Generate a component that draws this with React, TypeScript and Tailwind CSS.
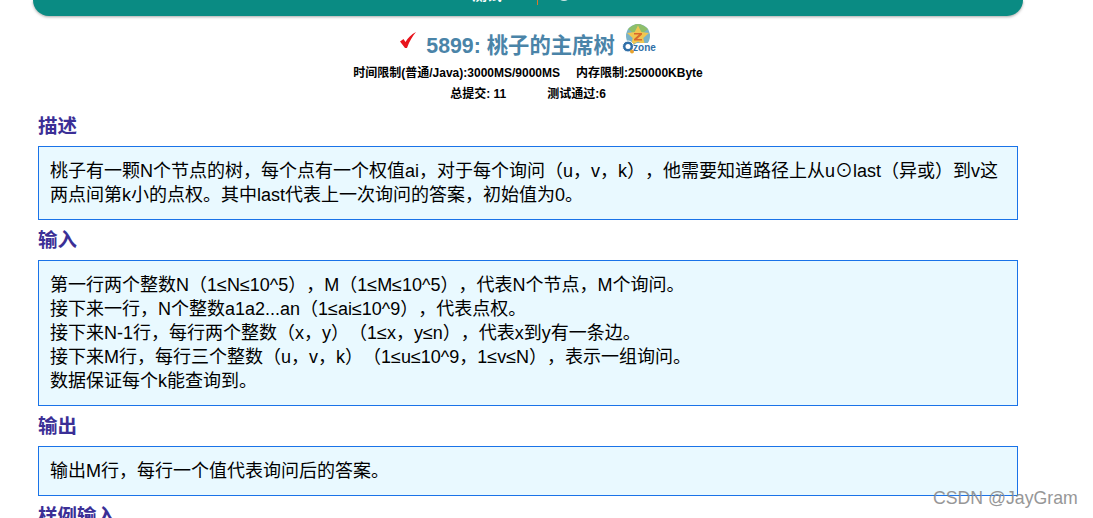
const SANS = 'font-["Liberation_Sans","Noto_Sans_CJK_SC",sans-serif]';

function Section({ title, lines }: { title: string; lines: string[] }) {
  return (
    <section>
      <h2 className="my-[7px] h-[26px] text-[19.5px] leading-[26px] font-bold text-[#3b2f96]">{title}</h2>
      <div className="border border-[#1a73e8] bg-[#e9f9ff] py-3 pr-3 pl-[11px] text-[18px] leading-6 text-black [text-spacing-trim:space-all]">
        {lines.map((line) => (
          <div key={line} className="whitespace-nowrap">{line}</div>
        ))}
      </div>
    </section>
  );
}

function QzoneBadge() {
  return (
    <svg width="36" height="30" viewBox="0 0 36 30" className="mt-[-7px] ml-[-2px] self-start">
      <circle cx="17" cy="12" r="12" fill="#7ab3c9" />
      <path d="M7 5c3-3 7-5 10-5s7 2 10 5l-10 8z" fill="#8fbf6a" />
      <path d="M17 1.500l3.300 6.500 7.700 1-5.700 5 1.700 7.500-7-3.800-7 3.800 1.700-7.500-5.700-5 7.700-1z" fill="#f0c651" />
      <path d="M13 9h8v1.500l-5 4.500h5v1.500h-8V15l5-4.500h-5z" fill="#d8692b" />
      <circle cx="7" cy="22.500" r="5.500" fill="#2f6fa8" stroke="#fff" strokeWidth="1" />
      <circle cx="7" cy="22.500" r="2.500" fill="#fff" />
      <circle cx="11" cy="27.500" r="2" fill="#e8a32b" />
      <rect x="12" y="19" width="23" height="10" rx="5" fill="#fff" />
      <text x="23.500" y="27" textAnchor="middle" fontSize="10" fontWeight="700" fill="#2f6fa8" style={{ fontFamily: '"Liberation Sans", sans-serif' }}>zone</text>
    </svg>
  );
}

export default function App() {
  return (
    <div className={`h-[518px] w-[1093px] overflow-hidden bg-white ${SANS}`}>
      <header className="ml-[33px] flex h-[16px] w-[990px] items-end rounded-b-[16px] bg-[#0a8b83] shadow-[0_1px_3px_rgba(0,0,0,0.35)]">
        <span className="mb-[14px] ml-[439px] text-[15px] leading-[15px] font-bold text-white">测试</span>
        <span className="ml-[35px] h-[5px] w-px self-start bg-[#d9772b]" />
        <span className="mb-[15px] ml-[19px] size-[14px] rounded-full bg-white/80" />
      </header>

      <div className="mx-[38px] w-[980px]">
        <div className="mt-[15px] flex h-[31px] items-center justify-center gap-[8px]">
          <svg width="18" height="18" viewBox="0 0 18 18" className="self-start">
            <path d="M1 10.500l3.500-2.500 2 3C9 7 12 3.500 17 1c-3.500 4-6.500 9-9 16h-2z" fill="#e8141c" />
          </svg>
          <h1 className="ml-px text-[21.33px] leading-[31px] font-bold text-[#4a84a8]">5899: 桃子的主席树</h1>
          <QzoneBadge />
        </div>
        <div className="mt-[1px] flex h-[20px] items-center justify-center gap-[16px] text-[12px] font-bold leading-[20px] text-black">
          <span>时间限制(普通/Java):3000MS/9000MS</span>
          <span>内存限制:250000KByte</span>
        </div>
        <div className="mt-[1px] flex h-[20px] items-center justify-center gap-[41px] text-[12px] font-bold leading-[20px] text-black">
          <span>总提交: 11</span>
          <span>测试通过:6</span>
        </div>

        <div className="mt-[2px] flex flex-col">
          <Section
            title="描述"
            lines={[
              '桃子有一颗N个节点的树，每个点有一个权值ai，对于每个询问（u，v，k），他需要知道路径上从u⊙last（异或）到v这',
              '两点间第k小的点权。其中last代表上一次询问的答案，初始值为0。',
            ]}
          />
          <Section
            title="输入"
            lines={[
              '第一行两个整数N（1≤N≤10^5），M（1≤M≤10^5），代表N个节点，M个询问。',
              '接下来一行，N个整数a1a2...an（1≤ai≤10^9），代表点权。',
              '接下来N-1行，每行两个整数（x，y）（1≤x，y≤n），代表x到y有一条边。',
              '接下来M行，每行三个整数（u，v，k）（1≤u≤10^9，1≤v≤N），表示一组询问。',
              '数据保证每个k能查询到。',
            ]}
          />
          <Section title="输出" lines={['输出M行，每行一个值代表询问后的答案。']} />
          <h2 className="my-[7px] h-[26px] text-[19.5px] leading-[26px] font-bold text-[#3b2f96]">样例输入</h2>
        </div>
      </div>

      <div className="absolute left-[933px] top-[488px] text-[17.7px] leading-[20px] text-[#8c8c8c] opacity-90">CSDN @JayGram</div>
    </div>
  );
}
